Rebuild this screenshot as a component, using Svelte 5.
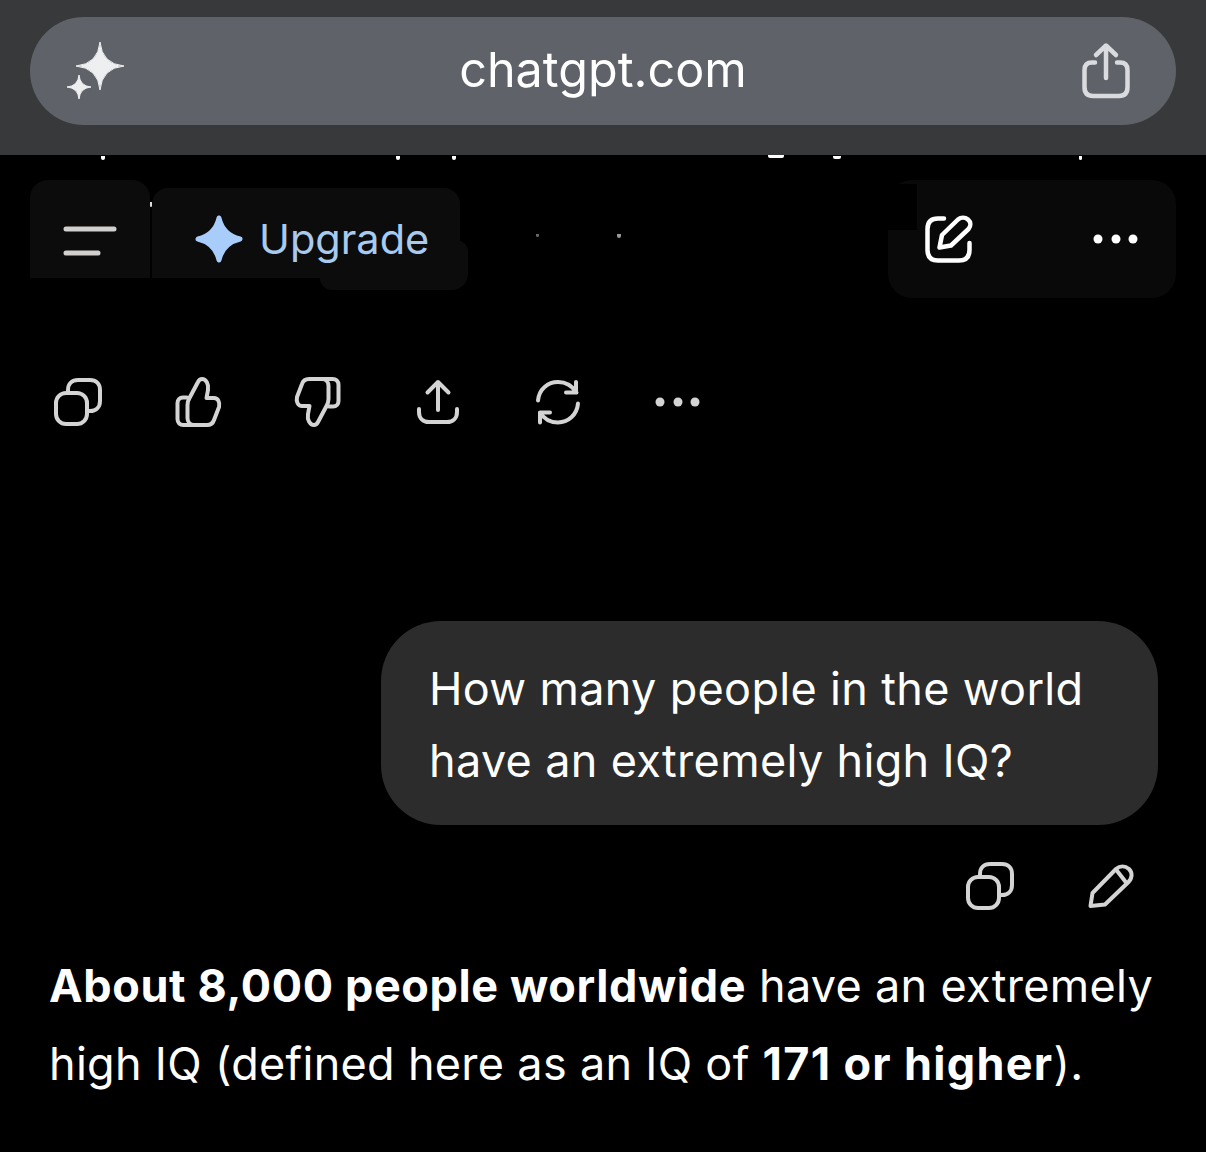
<script lang="ts">
	// bits of the scrolled-away line that peek out under the browser bar, plus a few stray specks
	const peeks = [
		{ x: 101, y: 156, w: 4, h: 4, c: '#fff' },
		{ x: 396, y: 156, w: 4, h: 4, c: '#fff' },
		{ x: 452, y: 156, w: 4, h: 4, c: '#fff' },
		{ x: 768, y: 155, w: 16, h: 3, c: '#fff' },
		{ x: 833, y: 156, w: 8, h: 3, c: '#fff' },
		{ x: 1079, y: 156, w: 3, h: 4, c: '#fff' },
		{ x: 150, y: 202, w: 2, h: 5, c: '#ddd' },
		{ x: 536, y: 234, w: 3, h: 3, c: '#666' },
		{ x: 617, y: 234, w: 4, h: 4, c: '#999' }
	];

	const thumb =
		'M26 53H39C43 53 45 51 46 48L51 35C52 30 50 26 46 26H38.500L40 18C41 12 38 7 34 7C32 7 31 8 30 10L21.500 26C20 28.500 19.500 30 19.500 33V46C19.500 50 22 53 26 53ZM19 25.500H15C11.500 25.500 9.500 28 9.500 31V47C9.500 51 12 53 15.500 53H26';
</script>

<div class="page">
	<div class="browser-bar">
		<div class="url-pill">
			<svg class="sparkles" viewBox="0 0 70 70" aria-hidden="true">
				<path d="M40 7Q42 29 64 31Q42 33 40 55Q38 33 16 31Q38 29 40 7Z" />
				<path d="M19 40Q20 51 31 52Q20 53 19 64Q18 53 7 52Q18 51 19 40Z" />
			</svg>
			<span class="url">chatgpt.com</span>
			<svg class="icon share-sheet" viewBox="0 0 60 60" aria-hidden="true">
				<path d="M19 21.500H16C11 21.500 8.500 24 8.500 29V46C8.500 52 11 55 17 55H43C49 55 51.500 52 51.500 46V29C51.500 24 49 21.500 44 21.500H41" />
				<path d="M30 37V5M20 14L30 4.500L40 14" />
			</svg>
		</div>
	</div>

	{#each peeks as p}
		<i class="peek" style="left: {p.x}px; top: {p.y}px; width: {p.w}px; height: {p.h}px; background: {p.c}"></i>
	{/each}

	<header class="topbar">
		<button class="menu" aria-label="Menu">
			<svg viewBox="0 0 60 60" aria-hidden="true">
				<path d="M6 19H54M6 43H38" />
			</svg>
		</button>
		<button class="upgrade">
			<svg viewBox="0 0 50 50" aria-hidden="true">
				<path d="M25 4Q29 21 46 25Q29 29 25 46Q21 29 4 25Q21 21 25 4Z" />
			</svg>
			<span>Upgrade</span>
		</button>
		<div class="top-actions">
			<svg class="icon compose" viewBox="0 0 60 60" aria-hidden="true">
				<path d="M26 9.500H20C13 9.500 9.500 13 9.500 20V41C9.500 48 13 51.500 20 51.500H41C48 51.500 51.500 48 51.500 41V34" />
				<path d="M21.500 38.500L24 26L40 10.500C43 8 47 8 50 10.500C53 13 53 17 50.500 20L33 36.500Z" />
			</svg>
			<svg class="icon dots" viewBox="0 0 60 20" aria-hidden="true">
				<circle cx="12" cy="10" r="4.500" />
				<circle cx="30" cy="10" r="4.500" />
				<circle cx="47" cy="10" r="4.500" />
			</svg>
		</div>
	</header>

	<div class="actions">
		<span class="slot">
			<svg class="icon" viewBox="0 0 60 60" aria-hidden="true">
				<rect x="8" y="21" width="31" height="31" rx="10" />
				<path d="M20 21V18C20 12 24 8 30 8H42C48 8 52 12 52 18V29C52 35 48 39 42 39H39" />
			</svg>
		</span>
		<span class="slot">
			<svg class="icon" viewBox="0 0 60 60" aria-hidden="true"><path d={thumb} /></svg>
		</span>
		<span class="slot">
			<svg class="icon" viewBox="0 0 60 60" aria-hidden="true">
				<path d={thumb} transform="rotate(180 30 30)" />
			</svg>
		</span>
		<span class="slot">
			<svg class="icon" viewBox="0 0 60 60" aria-hidden="true">
				<path d="M30 38V10M19.500 20.500L30 10L40.500 20.500" />
				<path d="M11 37V40C11 46 15 50 21 50H39C45 50 49 46 49 40V37" />
			</svg>
		</span>
		<span class="slot">
			<svg class="icon" viewBox="0 0 60 60" aria-hidden="true">
				<path d="M10 28.500C11 17 20 10 30 10C38 10 44 13.500 48.500 20.500M48 10V20.500H38" />
				<path d="M50 31.500C49 43 40 50.500 30 50.500C22 50.500 16 47 12 40.500M12 50.500V40.500H22" />
			</svg>
		</span>
		<span class="slot">
			<svg class="icon dots" viewBox="0 0 60 20" aria-hidden="true">
				<circle cx="12" cy="10" r="4.500" />
				<circle cx="30" cy="10" r="4.500" />
				<circle cx="47" cy="10" r="4.500" />
			</svg>
		</span>
	</div>

	<section class="question">
		<div class="bubble">How many people in the world<br />have an extremely high IQ?</div>
		<div class="question-actions">
			<span class="slot">
				<svg class="icon" viewBox="0 0 60 60" aria-hidden="true">
					<rect x="8" y="21" width="31" height="31" rx="10" />
					<path d="M20 21V18C20 12 24 8 30 8H42C48 8 52 12 52 18V29C52 35 48 39 42 39H39" />
				</svg>
			</span>
			<span class="slot">
				<svg class="icon" viewBox="0 0 60 60" aria-hidden="true">
					<path d="M10.500 50L12.500 37L36 13C40 9.500 45 9.500 49 13C52.500 16.500 52.500 22 48.500 26L25 48.500Z" />
					<path d="M36 13.500L46.500 27" />
				</svg>
			</span>
		</div>
	</section>

	<p class="answer">
		<strong>About 8,000 people worldwide</strong> have an extremely<br />
		high IQ (defined here as an IQ of <strong class="iq">171 or higher</strong>).
	</p>
</div>

<style>
	:global(body) {
		background: #000;
	}

	.page {
		position: relative;
		height: 1152px;
		overflow: hidden;
		background: #000;
		color: #fff;
		font-family: Inter, 'Liberation Sans', sans-serif;
	}

	.browser-bar {
		box-sizing: border-box;
		height: 155px;
		padding: 17px 30px 0;
		background: #38393b;
	}

	.url-pill {
		display: flex;
		align-items: center;
		justify-content: space-between;
		height: 108px;
		padding: 0 40px 0 30px;
		border-radius: 54px;
		background: #5f6268;
	}

	.sparkles {
		width: 70px;
		height: 70px;
		margin-top: -2px;
	}

	.sparkles path {
		fill: #eeeff1;
		stroke: #eeeff1;
		stroke-width: 1;
		stroke-linejoin: round;
	}

	.url {
		margin-top: -3px;
		font-size: 48.500px;
		line-height: 108px;
		color: #fff;
	}

	.icon {
		width: 60px;
		height: 60px;
		fill: none;
		stroke: #d4d4d4;
		stroke-width: 4;
		stroke-linecap: round;
		stroke-linejoin: round;
	}

	.icon.dots {
		height: 20px;
		fill: #d4d4d4;
		stroke: none;
	}

	.share-sheet {
		stroke: #d9dbde;
		stroke-width: 4.500;
	}

	.peek {
		position: absolute;
		border-radius: 0 0 2px 2px;
	}

	.topbar {
		display: flex;
		align-items: flex-start;
		gap: 2px;
		margin-top: 25px;
		padding: 0 30px;
	}

	.topbar button {
		border: 0;
		color: inherit;
		font: inherit;
	}

	.menu {
		display: flex;
		align-items: center;
		width: 120px;
		height: 98px;
		padding: 21px 0 0 30px;
		border-radius: 18px 18px 0 0;
		background: #0c0c0c;
	}

	.menu svg {
		width: 60px;
		height: 60px;
		fill: none;
		stroke: #d2d0ce;
		stroke-width: 5;
		stroke-linecap: round;
	}

	.topbar .upgrade {
		position: relative;
		display: flex;
		align-items: center;
		gap: 17px;
		width: 308px;
		height: 90px;
		margin-top: 8px;
		padding: 12px 0 0 42px;
		border-radius: 16px 16px 0 0;
		background: #0c0c0c;
		font-size: 41.500px;
		color: #a9caef;
	}

	.upgrade::after {
		content: '';
		position: absolute;
		left: 168px;
		top: 52px;
		width: 148px;
		height: 50px;
		border-radius: 0 12px 16px 12px;
		background: #0c0c0c;
	}

	.upgrade span,
	.upgrade svg {
		position: relative;
		z-index: 1;
	}

	.upgrade svg {
		width: 50px;
		height: 50px;
		margin-right: -2px;
	}

	.upgrade svg path {
		fill: #a9cdfb;
		stroke: #a9cdfb;
		stroke-width: 5;
		stroke-linejoin: round;
	}

	.top-actions {
		position: relative;
		display: flex;
		align-items: center;
		gap: 108px;
		box-sizing: border-box;
		width: 288px;
		height: 118px;
		margin-left: auto;
		padding-left: 30px;
		border-radius: 24px;
		background: #090909;
	}

	/* the blurred patch leaves a notch at the top left */
	.top-actions::before {
		content: '';
		position: absolute;
		left: 0;
		top: 4px;
		width: 29px;
		height: 46px;
		background: #000;
	}

	.top-actions .icon {
		position: relative;
		stroke: #fff;
		stroke-width: 4.500;
	}

	.top-actions .icon.dots {
		fill: #fff;
		stroke: none;
	}

	.actions {
		display: flex;
		margin-top: 74px;
		padding-left: 18px;
	}

	.slot {
		display: flex;
		align-items: center;
		justify-content: center;
		width: 120px;
		height: 60px;
	}

	.question {
		display: flex;
		flex-direction: column;
		align-items: flex-end;
		margin-top: 189px;
		padding-right: 48px;
	}

	.bubble {
		box-sizing: border-box;
		width: 777px;
		height: 204px;
		padding: 32px 48px;
		border-radius: 60px;
		background: #2c2c2c;
		font-size: 45px;
		line-height: 72px;
		letter-spacing: 0.33px;
	}

	.question-actions {
		display: flex;
		margin: 31px -12px 0 0;
	}

	.answer {
		margin: 31px 0 0;
		padding-left: 49px;
		font-size: 45px;
		line-height: 78px;
		letter-spacing: 0.3px;
		color: #fff;
	}

	.answer strong {
		font-weight: 700;
		letter-spacing: 0.62px;
	}

	.answer .iq {
		letter-spacing: 1.3px;
	}
</style>
